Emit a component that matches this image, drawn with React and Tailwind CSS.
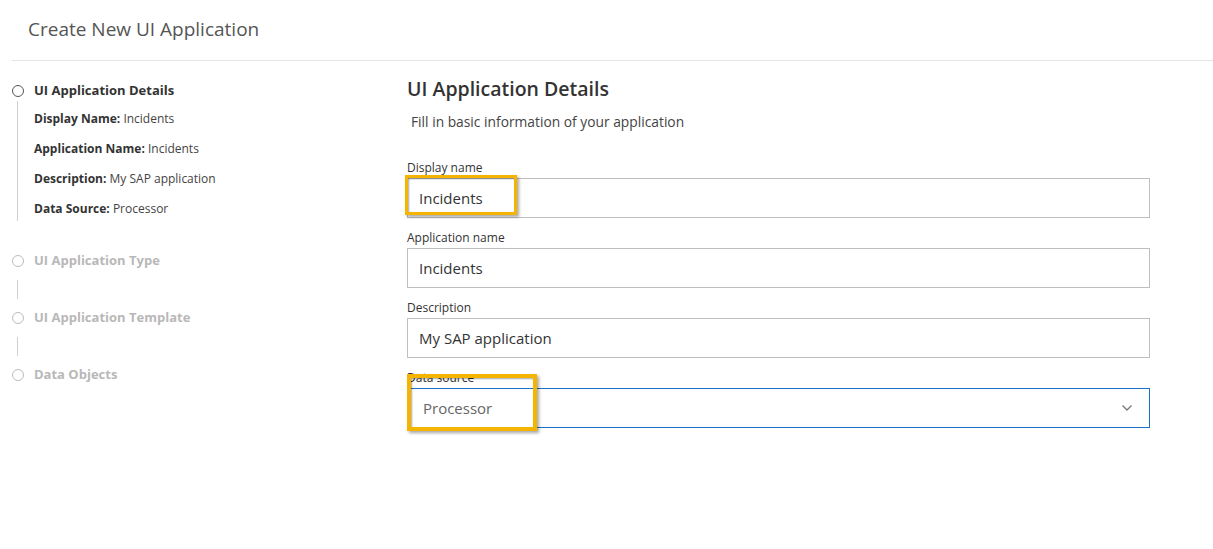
import React from "react";

function Circle({ active }) {
  return (
    <span
      className={
        "inline-block w-[12px] h-[12px] rounded-full border bg-white " +
        (active ? "border-[#555]" : "border-[#bdbdbd]")
      }
    />
  );
}

function Step({ title, active }) {
  return (
    <div className="flex items-center h-[20px]">
      <div className="w-[22px] flex justify-center">
        <Circle active={active} />
      </div>
      <span
        className={
          "text-[13px] font-bold ml-[5px] " +
          (active ? "text-[#333]" : "text-[#b8b8b8]")
        }
      >
        {title}
      </span>
    </div>
  );
}

function Field({ label, value, children }) {
  return (
    <div className="flex flex-col">
      <div className="h-[16px] text-[12px] leading-[16px] text-[#333]">{label}</div>
      <div className="relative mt-[2px] h-[40px] border border-[#bfbfbf] bg-white flex items-center pl-[11px] text-[15px] text-[#333]">
        {value}
        {children}
      </div>
    </div>
  );
}

export default function App() {
  const font = { fontFamily: '"Open Sans", "Noto Sans", sans-serif' };
  return (
    <div className="w-[1213px] h-[549px] bg-white overflow-hidden" style={font}>
      <div className="ml-[12px] h-[61px] border-b border-[#e5e5e5] flex items-center pl-[16px] pb-[2px]">
        <span className="text-[19px] text-[#555] font-normal">
          Create New UI Application
        </span>
      </div>
      <div className="flex">
        <div className="w-[407px] pl-[7px] pt-[20px]">
          <Step title="UI Application Details" active />
          <div className="ml-[10px] border-l border-[#cfcfcf] pl-[16px] pt-[9px] pb-[3px] flex flex-col gap-[12px] text-[12px] leading-[18px] text-[#444]">
            <div><span className="font-bold text-[#333]">Display Name:</span> Incidents</div>
            <div><span className="font-bold text-[#333]">Application Name:</span> Incidents</div>
            <div><span className="font-bold text-[#333]">Description:</span> My SAP application</div>
            <div><span className="font-bold text-[#333]">Data Source:</span> Processor</div>
          </div>
          <div className="mt-[30px]">
            <Step title="UI Application Type" />
          </div>
          <div className="ml-[10px] h-[37px] flex items-center">
            <div className="h-[19px] border-l border-[#cfcfcf]" />
          </div>
          <Step title="UI Application Template" />
          <div className="ml-[10px] h-[37px] flex items-center">
            <div className="h-[19px] border-l border-[#cfcfcf]" />
          </div>
          <Step title="Data Objects" />
        </div>
        <div className="w-[743px] flex flex-col">
          <div className="mt-[16px] h-[24px] text-[19.5px] leading-[24px] font-semibold text-[#333]">
            UI Application Details
          </div>
          <div className="mt-[12px] ml-[4px] h-[18px] text-[13.8px] leading-[18px] text-[#444]">
            Fill in basic information of your application
          </div>
          <div className="mt-[29px] flex flex-col gap-[12px]">
            <Field label="Display name" value="Incidents">
              <div className="absolute left-[-3px] top-[-4px] w-[112px] h-[40px] border-[3px] border-[#f5b400] shadow-[2px_2px_3px_rgba(0,0,0,0.35),inset_1px_1px_2px_rgba(0,0,0,0.35)]" />
            </Field>
            <Field label="Application name" value="Incidents" />
            <Field label="Description" value="My SAP application" />
            <div className="flex flex-col">
              <div className="h-[16px] text-[12px] leading-[16px] text-[#333]">Data source</div>
              <div className="relative mt-[2px] h-[40px] border border-[#1a6fc9] bg-white flex items-center pl-[15px] pr-[16px] text-[15px] text-[#666]">
                <span className="flex-1">Processor</span>
                <svg width="12" height="8" viewBox="0 0 12 8">
                  <path d="M1.5 1.5 L6 6 L10.5 1.5" fill="none" stroke="#777" strokeWidth="1.3" />
                </svg>
                <div className="absolute left-[-1px] top-[-15px] w-[130px] h-[57px] border-[4px] border-[#f5b400] shadow-[2px_2px_3px_rgba(0,0,0,0.35),inset_1px_1px_2px_rgba(0,0,0,0.35)]" />
              </div>
            </div>
          </div>
        </div>
      </div>
    </div>
  );
}
